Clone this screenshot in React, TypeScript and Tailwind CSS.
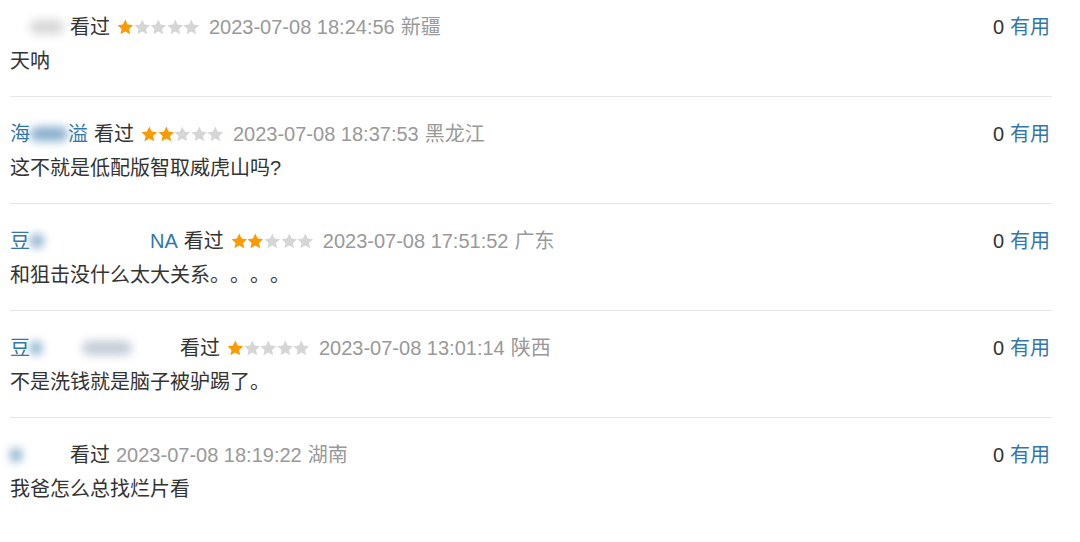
import React from "react";

const FONT = "font-['Liberation_Sans','Noto_Sans_CJK_SC',sans-serif]";

type Comment = {
  name: React.ReactNode;
  stars: number | null;
  time: string;
  place: string;
  text: string;
};

const Star = ({ on }: { on: boolean }) => (
  <svg viewBox="0 0 24 24" className="w-[16.6px] h-[16.6px]">
    <path
      d="M12 .8l3.4 7.2 7.9.9-5.9 5.4 1.6 7.8L12 18.1l-7 4 1.6-7.8L.7 8.9l7.9-.9z"
      fill={on ? "#f99b01" : "#d6d6d6"}
    />
  </svg>
);

const Blur = ({ w, color = "#37a" }: { w: number; color?: string }) => (
  <span
    className="inline-block h-[14px] blur-[5px] opacity-60 rounded-full"
    style={{ width: w, background: color }}
  />
);

const comments: Comment[] = [
  {
    name: (
      <span className="flex items-center w-[54px] justify-end">
        <Blur w={34} color="#bbb" />
      </span>
    ),
    stars: 1,
    time: "2023-07-08 18:24:56",
    place: "新疆",
    text: "天呐",
  },
  {
    name: (
      <span className="flex items-center text-[#37a]">
        海<Blur w={38} />溢
      </span>
    ),
    stars: 2,
    time: "2023-07-08 18:37:53",
    place: "黑龙江",
    text: "这不就是低配版智取威虎山吗?",
  },
  {
    name: (
      <span className="flex items-center text-[#37a]">
        豆<span className="w-[120px] flex"><Blur w={14} /></span>NA
      </span>
    ),
    stars: 2,
    time: "2023-07-08 17:51:52",
    place: "广东",
    text: "和狙击没什么太大关系。。。。",
  },
  {
    name: (
      <span className="flex items-center text-[#37a] w-[164px]">
        豆<Blur w={12} />
        <span className="ml-[40px]"><Blur w={50} color="#9ab" /></span>
      </span>
    ),
    stars: 1,
    time: "2023-07-08 13:01:14",
    place: "陕西",
    text: "不是洗钱就是脑子被驴踢了。",
  },
  {
    name: (
      <span className="flex items-center w-[54px]">
        <Blur w={12} />
      </span>
    ),
    stars: null,
    time: "2023-07-08 18:19:22",
    place: "湖南",
    text: "我爸怎么总找烂片看",
  },
];

export default function App() {
  return (
    <div className={`w-[1080px] h-[542px] bg-white overflow-hidden pl-[10px] pr-[28px] ${FONT} text-[20px] [text-spacing-trim:space-all]`}>
      {comments.map((c, i) => (
        <div
          key={i}
          className={`${i === 0 ? "pt-[10px]" : "pt-[20px]"} pb-[18px] ${
            i < comments.length - 1 ? "border-b border-[#e6e6e6]" : ""
          }`}
        >
          <div className="flex items-center h-[34px] leading-[34px]">
            <div className="flex items-center gap-[6px]">
              {c.name}
              <span className="text-[#333]">看过</span>
              {c.stars !== null && (
                <span className="flex ml-[1px] mr-[3px]">
                  {[0, 1, 2, 3, 4].map((s) => (
                    <Star key={s} on={s < (c.stars ?? 0)} />
                  ))}
                </span>
              )}
              <span className="text-[#999]">{c.time}</span>
              <span className="text-[#999]">{c.place}</span>
            </div>
            <div className="ml-auto flex items-center gap-[6px] pr-[2px]">
              <span className="text-[#333]">0</span>
              <span className="text-[#37a]">有用</span>
            </div>
          </div>
          <div className="h-[34px] leading-[34px] text-[#333]">{c.text}</div>
        </div>
      ))}
    </div>
  );
}
